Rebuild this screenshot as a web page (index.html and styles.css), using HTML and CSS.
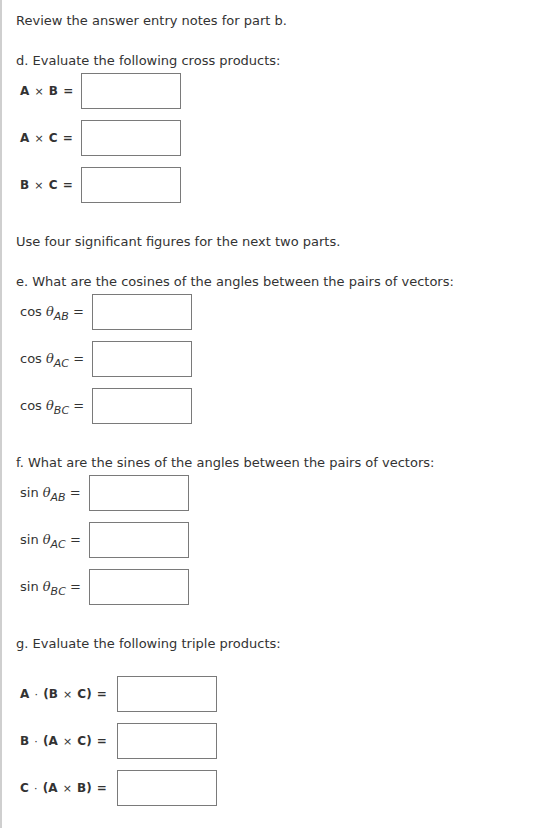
FILE: index.html
```html
<!DOCTYPE html>
<html>
<head>
<meta charset="utf-8">
<link rel="stylesheet" href="styles.css">
</head>
<body>
<div class="page">
  <p class="text first">Review the answer entry notes for part b.</p>

  <p class="text q-d">d. Evaluate the following cross products:</p>
  <div class="rows rows-d">
    <div class="row"><span class="lbl bold">A <span class="op">×</span> B =</span><span class="box"></span></div>
    <div class="row"><span class="lbl bold">A <span class="op">×</span> C =</span><span class="box"></span></div>
    <div class="row"><span class="lbl bold">B <span class="op">×</span> C =</span><span class="box"></span></div>
  </div>

  <p class="text note2">Use four significant figures for the next two parts.</p>

  <p class="text q-e">e. What are the cosines of the angles between the pairs of vectors:</p>
  <div class="rows rows-e">
    <div class="row"><span class="lbl">cos <i>θ</i><sub>AB</sub> =</span><span class="box"></span></div>
    <div class="row"><span class="lbl">cos <i>θ</i><sub>AC</sub> =</span><span class="box"></span></div>
    <div class="row"><span class="lbl">cos <i>θ</i><sub>BC</sub> =</span><span class="box"></span></div>
  </div>

  <p class="text q-f">f. What are the sines of the angles between the pairs of vectors:</p>
  <div class="rows rows-f">
    <div class="row"><span class="lbl">sin <i>θ</i><sub>AB</sub> =</span><span class="box"></span></div>
    <div class="row"><span class="lbl">sin <i>θ</i><sub>AC</sub> =</span><span class="box"></span></div>
    <div class="row"><span class="lbl">sin <i>θ</i><sub>BC</sub> =</span><span class="box"></span></div>
  </div>

  <p class="text q-g">g. Evaluate the following triple products:</p>
  <div class="rows rows-g">
    <div class="row"><span class="lbl bold">A <span class="op">·</span> (B <span class="op">×</span> C) =</span><span class="box"></span></div>
    <div class="row"><span class="lbl bold">B <span class="op">·</span> (A <span class="op">×</span> C) =</span><span class="box"></span></div>
    <div class="row"><span class="lbl bold">C <span class="op">·</span> (A <span class="op">×</span> B) =</span><span class="box"></span></div>
  </div>
</div>
</body>
</html>
```

FILE: styles.css
```css
html, body {
  margin: 0;
  padding: 0;
  background: #fff;
}
body {
  font-family: "DejaVu Sans", Verdana, sans-serif;
  font-size: 13px;
  color: #333;
}
.page {
  border-left: 2px solid #cfcfcf;
  min-height: 828px;
  box-sizing: border-box;
  padding: 13px 0 0 14px;
}
.text {
  margin: 0;
  line-height: 16px;
}
.q-d { margin-top: 24px; }
.rows {
  display: flex;
  flex-direction: column;
  gap: 11px;
  padding-left: 4px;
}
.rows-d { margin-top: 4px; }
.note2 { margin-top: 31px; }
.q-e { margin-top: 24px; }
.rows-e { margin-top: 4px; }
.q-f { margin-top: 31px; }
.rows-f { margin-top: 4px; }
.q-g { margin-top: 31px; }
.rows-g { margin-top: 24px; }
.row {
  display: flex;
  align-items: center;
  gap: 10px;
}
.rows-d .row {
  gap: 8px;
}
.rows-e .row,
.rows-f .row {
  gap: 8px;
}
.lbl {
  white-space: nowrap;
  line-height: 16px;
}
.lbl.bold {
  font-weight: bold;
  font-size: 12px;
  word-spacing: 1px;
}
.lbl .op {
  font-weight: normal;
  font-size: 11px;
}
.lbl i {
  font-family: "DejaVu Serif", serif;
}
.lbl sub {
  font-style: italic;
  font-size: 11px;
  vertical-align: -4px;
  line-height: 0;
}
.box {
  width: 98px;
  height: 34px;
  border: 1px solid #7a7a7a;
  background: #fff;
}
```
